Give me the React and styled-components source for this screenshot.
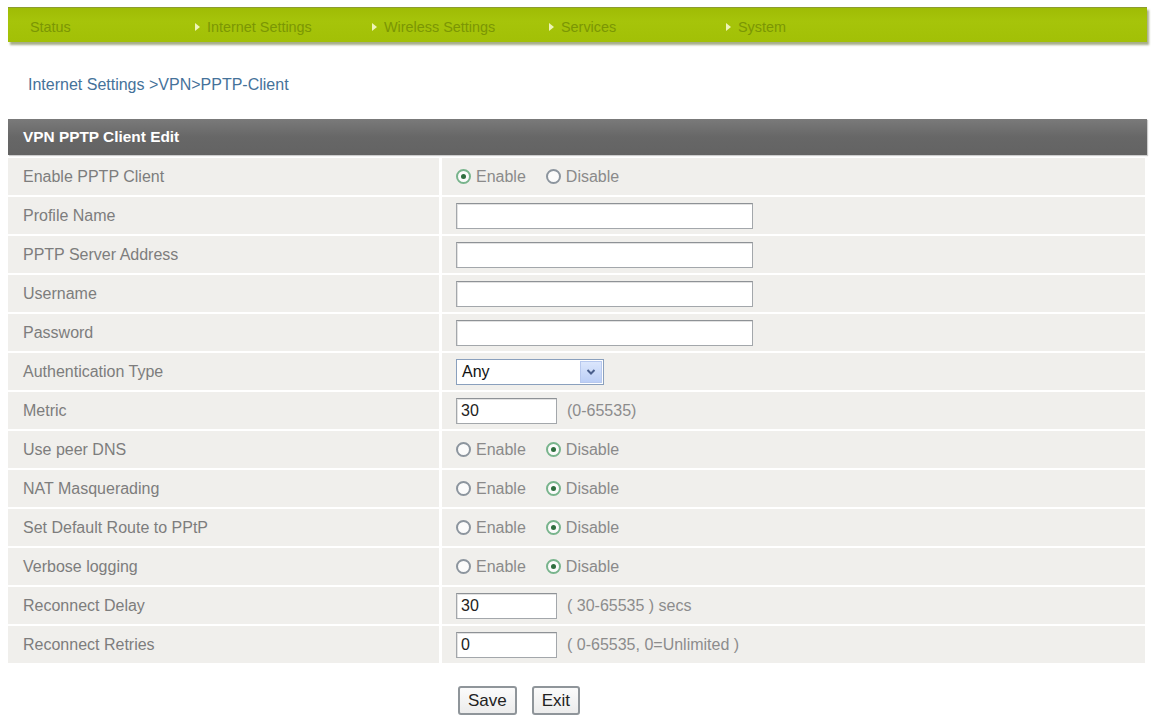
import React from 'react';
import styled, { createGlobalStyle } from 'styled-components';

const GlobalStyle = createGlobalStyle`
  body {
    margin: 0;
    background: #ffffff;
    font-family: "Liberation Sans", Arial, sans-serif;
  }
`;

const Page = styled.div`
  width: 1139px;
  padding: 7px 0 0 8px;
`;

const NavBar = styled.div`
  display: flex;
  height: 35px;
  padding: 3px 0 0 10px;
  box-sizing: border-box;
  align-items: center;
  background: linear-gradient(#9fbc05, #a6c40a 40%, #a2c006);
  border-top: 1px solid #8c9c30;
  box-shadow: 2px 3px 2px rgba(95, 105, 40, 0.55);
`;

const NavItem = styled.div`
  width: 177px;
  display: flex;
  align-items: center;
  font-size: 14.4px;
  color: #7b9604;
`;

const NavArrow = styled.span`
  width: 12px;
  display: flex;
  align-items: center;
  visibility: ${(p) => (p.$hidden ? 'hidden' : 'visible')};
  &::before {
    content: '';
    border-left: 5px solid #eef4b8;
    border-top: 4px solid transparent;
    border-bottom: 4px solid transparent;
  }
`;

const Crumb = styled.div`
  margin: 33px 0 0 20px;
  font-size: 16px;
  line-height: 20px;
  color: #45729a;
`;

const Panel = styled.div`
  margin-top: 24px;
`;

const PanelHead = styled.div`
  height: 36px;
  display: flex;
  align-items: center;
  padding-left: 15px;
  background: linear-gradient(#7a7a7a, #676767 50%, #636363);
  color: #ffffff;
  font-weight: bold;
  font-size: 15.4px;
  box-shadow: 1px 1px 1px rgba(0, 0, 0, 0.2);
`;

const Rows = styled.div`
  display: flex;
  flex-direction: column;
  gap: 2px;
  margin-top: 3px;
  width: 1137px;
`;

const Row = styled.div`
  display: grid;
  grid-template-columns: 431px 1fr;
  column-gap: 3px;
  height: 37px;
`;

const Label = styled.div`
  background: #f0efec;
  display: flex;
  align-items: center;
  padding-left: 15px;
  font-size: 16px;
  color: #7d7d7d;
`;

const Value = styled.div`
  background: #f0efec;
  display: flex;
  align-items: center;
  padding-left: 14px;
  font-size: 16px;
  color: #8a8a8a;
`;

const RadioOption = styled.label`
  display: flex;
  align-items: center;
  gap: 5px;
  margin-right: 20px;
  color: #8a8a8a;
`;

const RadioDot = styled.span`
  width: 15px;
  height: 15px;
  box-sizing: border-box;
  border-radius: 50%;
  border: 2px solid ${(p) => (p.$on ? '#78b48c' : '#8c959e')};
  background: #fbfbfb;
  display: flex;
  align-items: center;
  justify-content: center;
  &::after {
    content: '';
    width: 5px;
    height: 5px;
    border-radius: 50%;
    background: ${(p) => (p.$on ? '#2f6f3f' : 'transparent')};
  }
`;

const TextBox = styled.div`
  width: ${(p) => p.$w}px;
  height: 26px;
  box-sizing: border-box;
  background: #ffffff;
  border: 1px solid #a3a7ab;
  border-top-color: #8e9296;
  box-shadow: inset 1px 1px 0 #e2e2e2;
  display: flex;
  align-items: center;
  padding-left: 4px;
  font-size: 16px;
  color: #222;
`;

const Hint = styled.span`
  margin-left: 10px;
  color: #8c8c8c;
`;

const Select = styled.div`
  width: 148px;
  height: 26px;
  box-sizing: border-box;
  border: 1px solid #8aa0bd;
  background: #ffffff;
  display: flex;
  align-items: center;
  justify-content: space-between;
  padding: 0 1px 0 5px;
  font-size: 16px;
  color: #111;
`;

const SelectButton = styled.span`
  width: 22px;
  height: 22px;
  display: flex;
  align-items: center;
  justify-content: center;
  background: linear-gradient(#dbe6fc, #bccff6);
  border: 1px solid #b7c8ee;
  box-sizing: border-box;
`;

const Actions = styled.div`
  display: flex;
  gap: 15px;
  margin-top: 23px;
  padding-left: 450px;
`;

const Button = styled.button`
  height: 29px;
  padding: 0 8px;
  font-family: "Liberation Sans", Arial, sans-serif;
  font-size: 17px;
  color: #222;
  background: linear-gradient(#fbfbfb, #ececec);
  border: 2px solid #8f959a;
  border-radius: 3px;
`;

const navItems = ['Status', 'Internet Settings', 'Wireless Settings', 'Services', 'System'];

const Radio = ({ on }) => (
  <>
    <RadioOption>
      <RadioDot $on={on} />
      Enable
    </RadioOption>
    <RadioOption>
      <RadioDot $on={!on} />
      Disable
    </RadioOption>
  </>
);

const rows = [
  ['Enable PPTP Client', <Radio on />],
  ['Profile Name', <TextBox $w={297} />],
  ['PPTP Server Address', <TextBox $w={297} />],
  ['Username', <TextBox $w={297} />],
  ['Password', <TextBox $w={297} />],
  [
    'Authentication Type',
    <Select>
      Any
      <SelectButton>
        <svg width="10" height="8" viewBox="0 0 10 8">
          <path d="M1.5 2 L5 5.5 L8.5 2" fill="none" stroke="#4a5f8c" strokeWidth="2" />
        </svg>
      </SelectButton>
    </Select>,
  ],
  ['Metric', <><TextBox $w={101}>30</TextBox><Hint>(0-65535)</Hint></>],
  ['Use peer DNS', <Radio />],
  ['NAT Masquerading', <Radio />],
  ['Set Default Route to PPtP', <Radio />],
  ['Verbose logging', <Radio />],
  ['Reconnect Delay', <><TextBox $w={101}>30</TextBox><Hint>( 30-65535 ) secs</Hint></>],
  ['Reconnect Retries', <><TextBox $w={101}>0</TextBox><Hint>( 0-65535, 0=Unlimited )</Hint></>],
];

export default function App() {
  return (
    <Page>
      <GlobalStyle />
      <NavBar>
        {navItems.map((item, i) => (
          <NavItem key={item}>
            <NavArrow $hidden={i === 0} />
            {item}
          </NavItem>
        ))}
      </NavBar>
      <Crumb>Internet Settings &gt;VPN&gt;PPTP-Client</Crumb>
      <Panel>
        <PanelHead>VPN PPTP Client Edit</PanelHead>
        <Rows>
          {rows.map(([label, value]) => (
            <Row key={label}>
              <Label>{label}</Label>
              <Value>{value}</Value>
            </Row>
          ))}
        </Rows>
      </Panel>
      <Actions>
        <Button>Save</Button>
        <Button>Exit</Button>
      </Actions>
    </Page>
  );
}
